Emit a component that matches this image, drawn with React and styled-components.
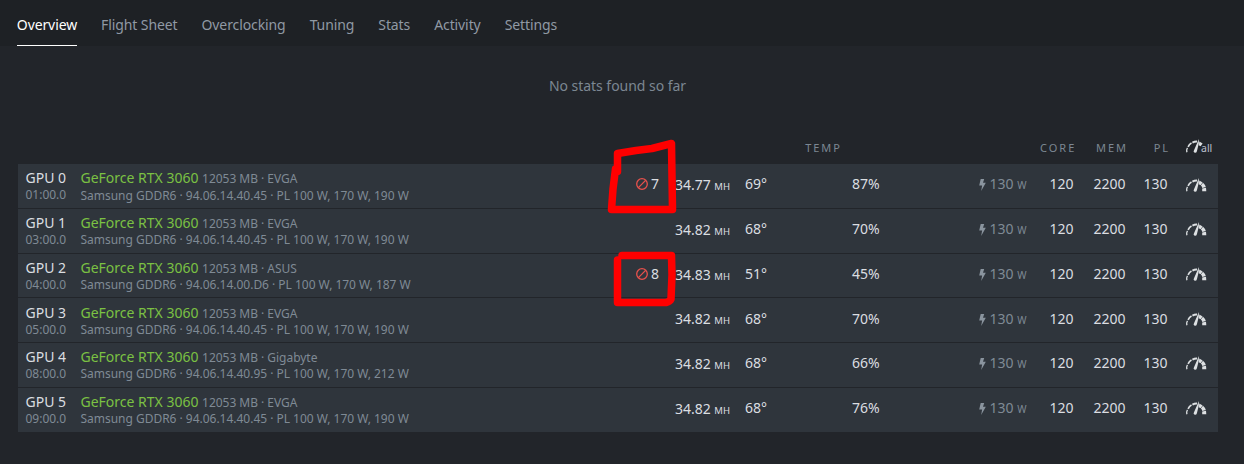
import React from 'react';
import styled, { createGlobalStyle } from 'styled-components';

const GlobalStyle = createGlobalStyle`
  body {
    margin: 0;
    background: #22252a;
    color: #dbdee1;
    font-family: "Noto Sans", "Open Sans", sans-serif;
    font-size: 14px;
  }
`;

const Page = styled.div`
  position: relative;
  width: 1244px;
  height: 464px;
  overflow: hidden;
`;

const Nav = styled.nav`
  display: flex;
  gap: 24px;
  height: 46px;
  padding-left: 16.8px;
  letter-spacing: -0.1px;
  background: #1e2125;
`;

const NavItem = styled.a`
  box-sizing: border-box;
  height: 46px;
  line-height: 50px;
  white-space: nowrap;
  color: ${p => (p.$active ? '#fff' : '#9099a4')};
  border-bottom: 1px solid ${p => (p.$active ? '#fff' : 'transparent')};
`;

const EmptyStats = styled.div`
  height: 86px;
  padding-right: 9px;
  line-height: 80px;
  text-align: center;
  letter-spacing: -0.04px;
  color: #7c8792;
`;

const Table = styled.div`
  width: 1200px;
  margin-left: 18px;
`;

const columns = '62.5px 538.5px 48px 63px 75px 114px 107.5px 47px 52px 42px 1fr';

const HeadRow = styled.div`
  display: grid;
  grid-template-columns: ${columns};
  align-items: center;
  box-sizing: border-box;
  height: 32.35px;
  padding-bottom: 2px;
  font-size: 11px;
  letter-spacing: 2px;
  color: #7c8792;
`;

const HeadCell = styled.div`
  grid-column: ${p => p.$col};
  text-align: right;
  white-space: nowrap;
  margin-right: ${p => p.$pad || 0}px;
`;

const Row = styled.div`
  box-sizing: border-box;
  display: grid;
  grid-template-columns: ${columns};
  height: 44.7px;
  background: #2f353c;
  border-bottom: 1px solid #22252a;

  &:last-child {
    height: 44.1px;
    border-bottom: 0;
  }
`;

const Info = styled.div`
  padding: 5.1px 0 0 ${p => p.$indent || 0}px;
  white-space: nowrap;
`;

const Line = styled.div`
  line-height: 18px;
`;

const Model = styled.span`
  color: #7bc143;
`;

const Muted = styled.span`
  color: #7f8a95;
  font-size: 12px;
  letter-spacing: -0.03px;
`;

const SubLine = styled.div`
  line-height: 16px;
  margin-top: ${p => p.$shift || 0}px;
  font-size: 12px;
  letter-spacing: -0.02px;
  color: #7f8a95;
`;

const Value = styled.div`
  text-align: ${p => p.$align || 'right'};
  padding-left: ${p => p.$indent || 0}px;
  padding-top: ${p => p.$top || 10.1}px;
  line-height: 20px;
  white-space: nowrap;
  color: ${p => (p.$muted ? '#7f8a95' : '#dbdee1')};

  svg {
    display: inline-block;
    vertical-align: -2px;
  }
`;

const Unit = styled.span`
  font-size: ${p => p.$size || 9.5}px;
`;

const Rejected = styled(Value)`
  display: flex;
  align-items: center;
  gap: 3px;
  height: 20px;
`;

const GaugeCell = styled.div`
  display: flex;
  padding: 13.4px 0 0 18px;
`;

const HeadGauge = styled.div`
  grid-column: 11;
  display: flex;
  align-items: flex-end;
  height: 15px;
  padding: 0 0 1px 18px;
`;

const AllLabel = styled.span`
  margin: 0 0 1px -5.5px;
  font-size: 10.5px;
  line-height: 10px;
  letter-spacing: 0;
  color: #b9bfca;
`;

const Marks = styled.svg`
  position: absolute;
  top: 0;
  left: 0;
  pointer-events: none;
`;

const Gauge = ({ cut }) => (
    <svg width="21" height="15" viewBox="0 0 21 15" fill="none" stroke="#dde0e2">
        <path d="M1 13.3Q.2 10.8 1.5 8.8" strokeWidth="1.3" />
        <path d="M2.1 7.8Q3.3 5.3 5.5 4.1" strokeWidth="1.7" />
        <path d="M6.4 3.6Q8.6 2.5 11 2.6" strokeWidth="2" />
        <path d="M12.7 0L12.9 4.1 10.9 12.2Q10.3 14.3 8.4 13.6 7 12.8 8 11.2L11.3 3.7Z" fill="#dde0e2" stroke="none" />
        <path d="M13.4 2.6L16.6 4.4 14.6 7.3 12.8 6.2Z" fill="#dde0e2" stroke="none" />
        {!cut && <path d="M17 4.8Q19.2 6.7 19.8 9.1L16.3 10Q15.9 8.6 14.9 7.6Z" fill="#dde0e2" stroke="none" />}
        {!cut && <path d="M16.2 10.5L20 9.7 20.3 13.3H16.2Z" fill="#dde0e2" stroke="none" />}
    </svg>
);

const Ban = () => (
    <svg width="12" height="12" viewBox="0 0 12 12" fill="none" stroke="#e8514c" strokeWidth="1.3">
        <circle cx="6" cy="6" r="5.3" />
        <path d="M2.4 9.6L9.6 2.4" />
    </svg>
);

const Bolt = () => (
    <svg width="7" height="12" viewBox="0 0 7 12" fill="#8a949e">
        <path d="M1.7 0H5.2L4 3.7H6.8L2.2 12 3.1 6.4H.2Z" />
    </svg>
);

const tabs = ['Overview', 'Flight Sheet', 'Overclocking', 'Tuning', 'Stats', 'Activity', 'Settings'];

const gpus = [
    { pci: '01:00.0', brand: 'EVGA', bios: '94.06.14.40.45', max: 190, rejected: 7, hash: '34.77', temp: 69, fan: 87 },
    { pci: '03:00.0', brand: 'EVGA', bios: '94.06.14.40.45', max: 190, hash: '34.82', temp: 68, fan: 70 },
    { pci: '04:00.0', brand: 'ASUS', bios: '94.06.14.00.D6', max: 187, rejected: 8, hash: '34.83', temp: 51, fan: 45 },
    { pci: '05:00.0', brand: 'EVGA', bios: '94.06.14.40.45', max: 190, hash: '34.82', temp: 68, fan: 70 },
    { pci: '08:00.0', brand: 'Gigabyte', bios: '94.06.14.40.95', max: 212, hash: '34.82', temp: 68, fan: 66 },
    { pci: '09:00.0', brand: 'EVGA', bios: '94.06.14.40.45', max: 190, hash: '34.82', temp: 68, fan: 76 },
];

const GpuRow = ({ gpu, index }) => (
    <Row>
        <Info $indent={7.5}>
            <Line>{`GPU ${index}`}</Line>
            <SubLine>{gpu.pci}</SubLine>
        </Info>
        <Info>
            <Line><Model>GeForce RTX 3060</Model> <Muted>{`12053 MB · ${gpu.brand}`}</Muted></Line>
            <SubLine $shift={-0.8}>{`Samsung GDDR6 · ${gpu.bios} · PL 100 W, 170 W, ${gpu.max} W`}</SubLine>
        </Info>
        <Rejected $indent={17}>
            {gpu.rejected && <Ban />}
            {gpu.rejected}
        </Rejected>
        <Value $top={10.9}>{gpu.hash} <Unit>MH</Unit></Value>
        <Value $align="left" $indent={15}>{`${gpu.temp}°`}</Value>
        <Value $align="left" $indent={47}>{`${gpu.fan}%`}</Value>
        <Value $muted><Bolt /> 130 <Unit $size={10}>W</Unit></Value>
        <Value>120</Value>
        <Value>2200</Value>
        <Value>130</Value>
        <GaugeCell><Gauge /></GaugeCell>
    </Row>
);

const App = () => (
    <Page>
        <GlobalStyle />
        <Nav>
            {tabs.map((tab, i) => <NavItem key={tab} $active={i === 0}>{tab}</NavItem>)}
        </Nav>
        <EmptyStats>No stats found so far</EmptyStats>
        <Table>
            <HeadRow>
                <HeadCell $col={6} $pad={77}>TEMP</HeadCell>
                <HeadCell $col={8} $pad={-2.8}>CORE</HeadCell>
                <HeadCell $col={9} $pad={-2.6}>MEM</HeadCell>
                <HeadCell $col={10} $pad={-2.6}>PL</HeadCell>
                <HeadGauge><Gauge cut /><AllLabel>all</AllLabel></HeadGauge>
            </HeadRow>
            {gpus.map((gpu, i) => <GpuRow key={gpu.pci} gpu={gpu} index={i} />)}
        </Table>
        <Marks width="1244" height="464" fill="none" stroke="#f00" strokeWidth="7.5" strokeLinecap="round" strokeLinejoin="round">
            <path d="M617.5 171.5V153.5L636 150.5 652 148.5 671.5 143.5 672.5 209.5H611.5L613 189 615.5 169" />
            <path d="M622 255.5H671.5L672 275 671 299Q670 301.5 666 302.5H617.5V260" />
        </Marks>
    </Page>
);

export default App;
